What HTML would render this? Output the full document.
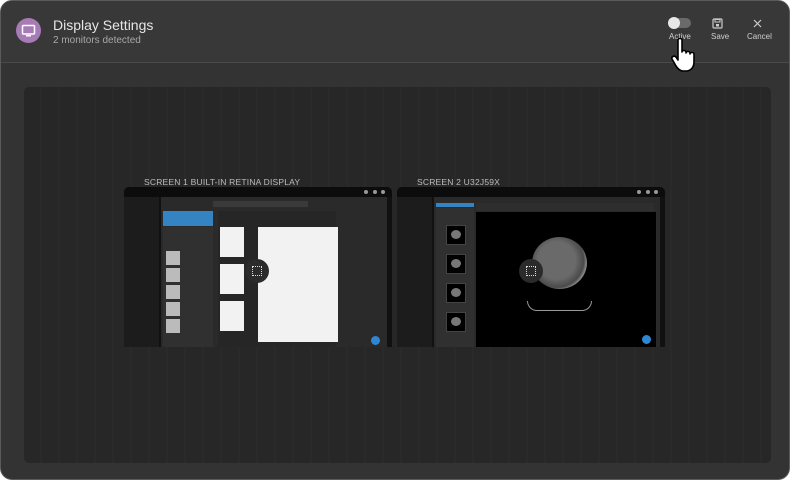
<!DOCTYPE html>
<html><head><meta charset="utf-8"><style>
*{box-sizing:border-box;margin:0;padding:0}
body{width:790px;height:480px;background:#fff;font-family:"Liberation Sans",sans-serif;overflow:hidden;position:relative}
.frame{position:absolute;left:0;top:0;width:790px;height:480px;background:#333;border:1px solid #5a5a5a;border-radius:12px;overflow:hidden}
.hdr{position:absolute;left:0;top:0;right:0;height:62px;background:#383838;border-bottom:1px solid #4a4a4a}
.ic{position:absolute;left:15px;top:17px;width:25px;height:25px;border-radius:50%;background:#a77bb6}
.t1{position:absolute;left:52px;top:16px;color:#e6e6e6;font-size:14px}
.t2{position:absolute;left:52px;top:34px;color:#a8a8a8;font-size:10px}
.btn{position:absolute;top:31px;color:#cfcfcf;font-size:8px;text-align:center}
.panel{position:absolute;left:23px;top:86px;width:747px;height:376px;border-radius:5px;background:#272727;
background-image:repeating-linear-gradient(90deg,transparent 0 16px,rgba(255,255,255,.012) 16px 18px);}
.lbl{position:absolute;color:#bcbcbc;font-size:8.5px;letter-spacing:.2px}
.scr{position:absolute;width:268px;height:160px;background:#111;border-radius:5px 5px 0 0;overflow:hidden}
.tb{position:absolute;left:0;top:0;right:0;height:10px;background:#0c0c0c}
.dot{position:absolute;top:3px;width:4px;height:4px;border-radius:50%;background:#999}
.side{position:absolute;left:0;top:10px;width:35px;bottom:0;background:#1c1c1c}
.cont{position:absolute;left:37px;top:10px;right:5px;bottom:0;background:#2a2a2a}
.doc{position:absolute;background:#f2f2f2}
.fab{position:absolute;width:9px;height:9px;border-radius:50%;background:#2f87d4}
.sel{position:absolute;width:24px;height:24px;border-radius:50%;background:#2b2b2b}
.sel i{position:absolute;left:7px;top:7px;width:10px;height:10px;border:1px dotted #ddd}
.th{position:absolute;width:14px;height:14px;background:#bbb}
.ct{position:absolute;width:20px;height:20px;background:#000;border:1px solid #444}
.ct:after{content:"";position:absolute;left:4px;top:4px;width:10px;height:9px;border-radius:50%;background:#777}
</style></head><body>
<div class="frame">
 <div class="hdr">
  <div class="ic"><svg width="25" height="25" viewBox="0 0 25 25"><rect x="6.5" y="7.5" width="12" height="8.5" rx="1" fill="none" stroke="#fff" stroke-width="1.5"/><rect x="10" y="17" width="5" height="1.5" fill="#fff"/></svg></div>
  <div class="t1">Display Settings</div>
  <div class="t2">2 monitors detected</div>
  <div style="position:absolute;left:668px;top:17px;width:22px;height:10px;border-radius:5px;background:#6a6a6a"></div>
  <div style="position:absolute;left:667px;top:16px;width:12px;height:12px;border-radius:50%;background:#e8e8e8"></div>
  <div class="btn" style="left:668px">Active</div>
  <svg style="position:absolute;left:711px;top:17px" width="11" height="11" viewBox="0 0 11 11"><rect x="1" y="1" width="9" height="9" rx="1" fill="none" stroke="#ccc" stroke-width="1.2"/><rect x="3" y="1.5" width="5" height="2.5" fill="none" stroke="#ccc"/><rect x="4" y="6" width="3" height="2.5" fill="#ccc"/></svg>
  <div class="btn" style="left:710px">Save</div>
  <svg style="position:absolute;left:752px;top:18px" width="9" height="9" viewBox="0 0 9 9"><path d="M1 1L8 8M8 1L1 8" stroke="#ccc" stroke-width="1.2"/></svg>
  <div class="btn" style="left:746px">Cancel</div>
 </div>
 <div class="panel"></div>
 <div class="lbl" style="left:143px;top:176px">SCREEN 1 BUILT-IN RETINA DISPLAY</div>
 <div class="lbl" style="left:416px;top:176px">SCREEN 2 U32J59X</div>

 <div class="scr" style="left:123px;top:186px">
  <div class="tb"><div class="dot" style="left:240px"></div><div class="dot" style="left:249px"></div><div class="dot" style="left:257px"></div></div>
  <div class="side"></div>
  <div class="cont">
   <div style="position:absolute;left:52px;top:4px;width:95px;height:6px;background:#3a3a3a;border-radius:1px"></div>
   <div style="position:absolute;left:2px;top:14px;width:50px;height:15px;background:#3484c4"></div>
   <div style="position:absolute;left:2px;top:30px;width:50px;bottom:0;background:#303030"></div>
   <div style="position:absolute;left:57px;top:14px;width:118px;bottom:0;background:#262626"></div>
   <div class="doc" style="left:59px;top:30px;width:24px;height:30px"></div>
   <div class="doc" style="left:59px;top:67px;width:24px;height:30px"></div>
   <div class="doc" style="left:59px;top:104px;width:24px;height:30px"></div>
   <div class="doc" style="left:97px;top:30px;width:80px;height:115px"></div>
   <div class="th" style="left:5px;top:54px"></div>
   <div class="th" style="left:5px;top:71px"></div>
   <div class="th" style="left:5px;top:88px"></div>
   <div class="th" style="left:5px;top:105px"></div>
   <div class="th" style="left:5px;top:122px"></div>
   <div class="fab" style="left:210px;top:139px"></div>
  </div>
  <div class="sel" style="left:121px;top:72px"><i></i></div>
 </div>

 <div class="scr" style="left:396px;top:186px">
  <div class="tb"><div class="dot" style="left:240px"></div><div class="dot" style="left:249px"></div><div class="dot" style="left:257px"></div></div>
  <div class="side"></div>
  <div class="cont">
   <div style="position:absolute;left:2px;top:6px;width:38px;height:4px;background:#3484c4"></div>
   <div style="position:absolute;left:2px;top:11px;width:38px;bottom:0;background:#303030"></div>
   <div class="ct" style="left:12px;top:28px"></div>
   <div class="ct" style="left:12px;top:57px"></div>
   <div class="ct" style="left:12px;top:86px"></div>
   <div class="ct" style="left:12px;top:115px"></div>
   <div style="position:absolute;left:42px;top:6px;width:178px;height:8px;background:#2e2e2e"></div>
   <div style="position:absolute;left:42px;top:15px;width:180px;height:135px;background:#000"></div>
   <div style="position:absolute;left:98px;top:40px;width:55px;height:52px;border-radius:50%;background:radial-gradient(circle at 45% 45%,#6a6a6a 0 45%,#4a4a4a 65%,#888 72%,#111 80%)"></div>
   <div style="position:absolute;left:93px;top:104px;width:65px;height:10px;border:1px solid #999;border-top:none;border-radius:0 0 40px 40px"></div>
   <div class="fab" style="left:208px;top:138px"></div>
  </div>
  <div class="sel" style="left:122px;top:72px"><i></i></div>
 </div>

 <svg style="position:absolute;left:668px;top:36px" width="30" height="36" viewBox="0 0 30 36"><path d="M9 3c0-2 4-2 4 0v12c0-2 4-2 4 0v1c0-2 4-2 4 0v1c0-2 4-2 4 0v8c0 5-3 9-8 9h-3c-3 0-5-2-7-5l-4-7c-1-2 2-4 4-2l2 3V3z" fill="#fff" stroke="#000" stroke-width="1.6" stroke-linejoin="round"/></svg>
</div>
</body></html>
